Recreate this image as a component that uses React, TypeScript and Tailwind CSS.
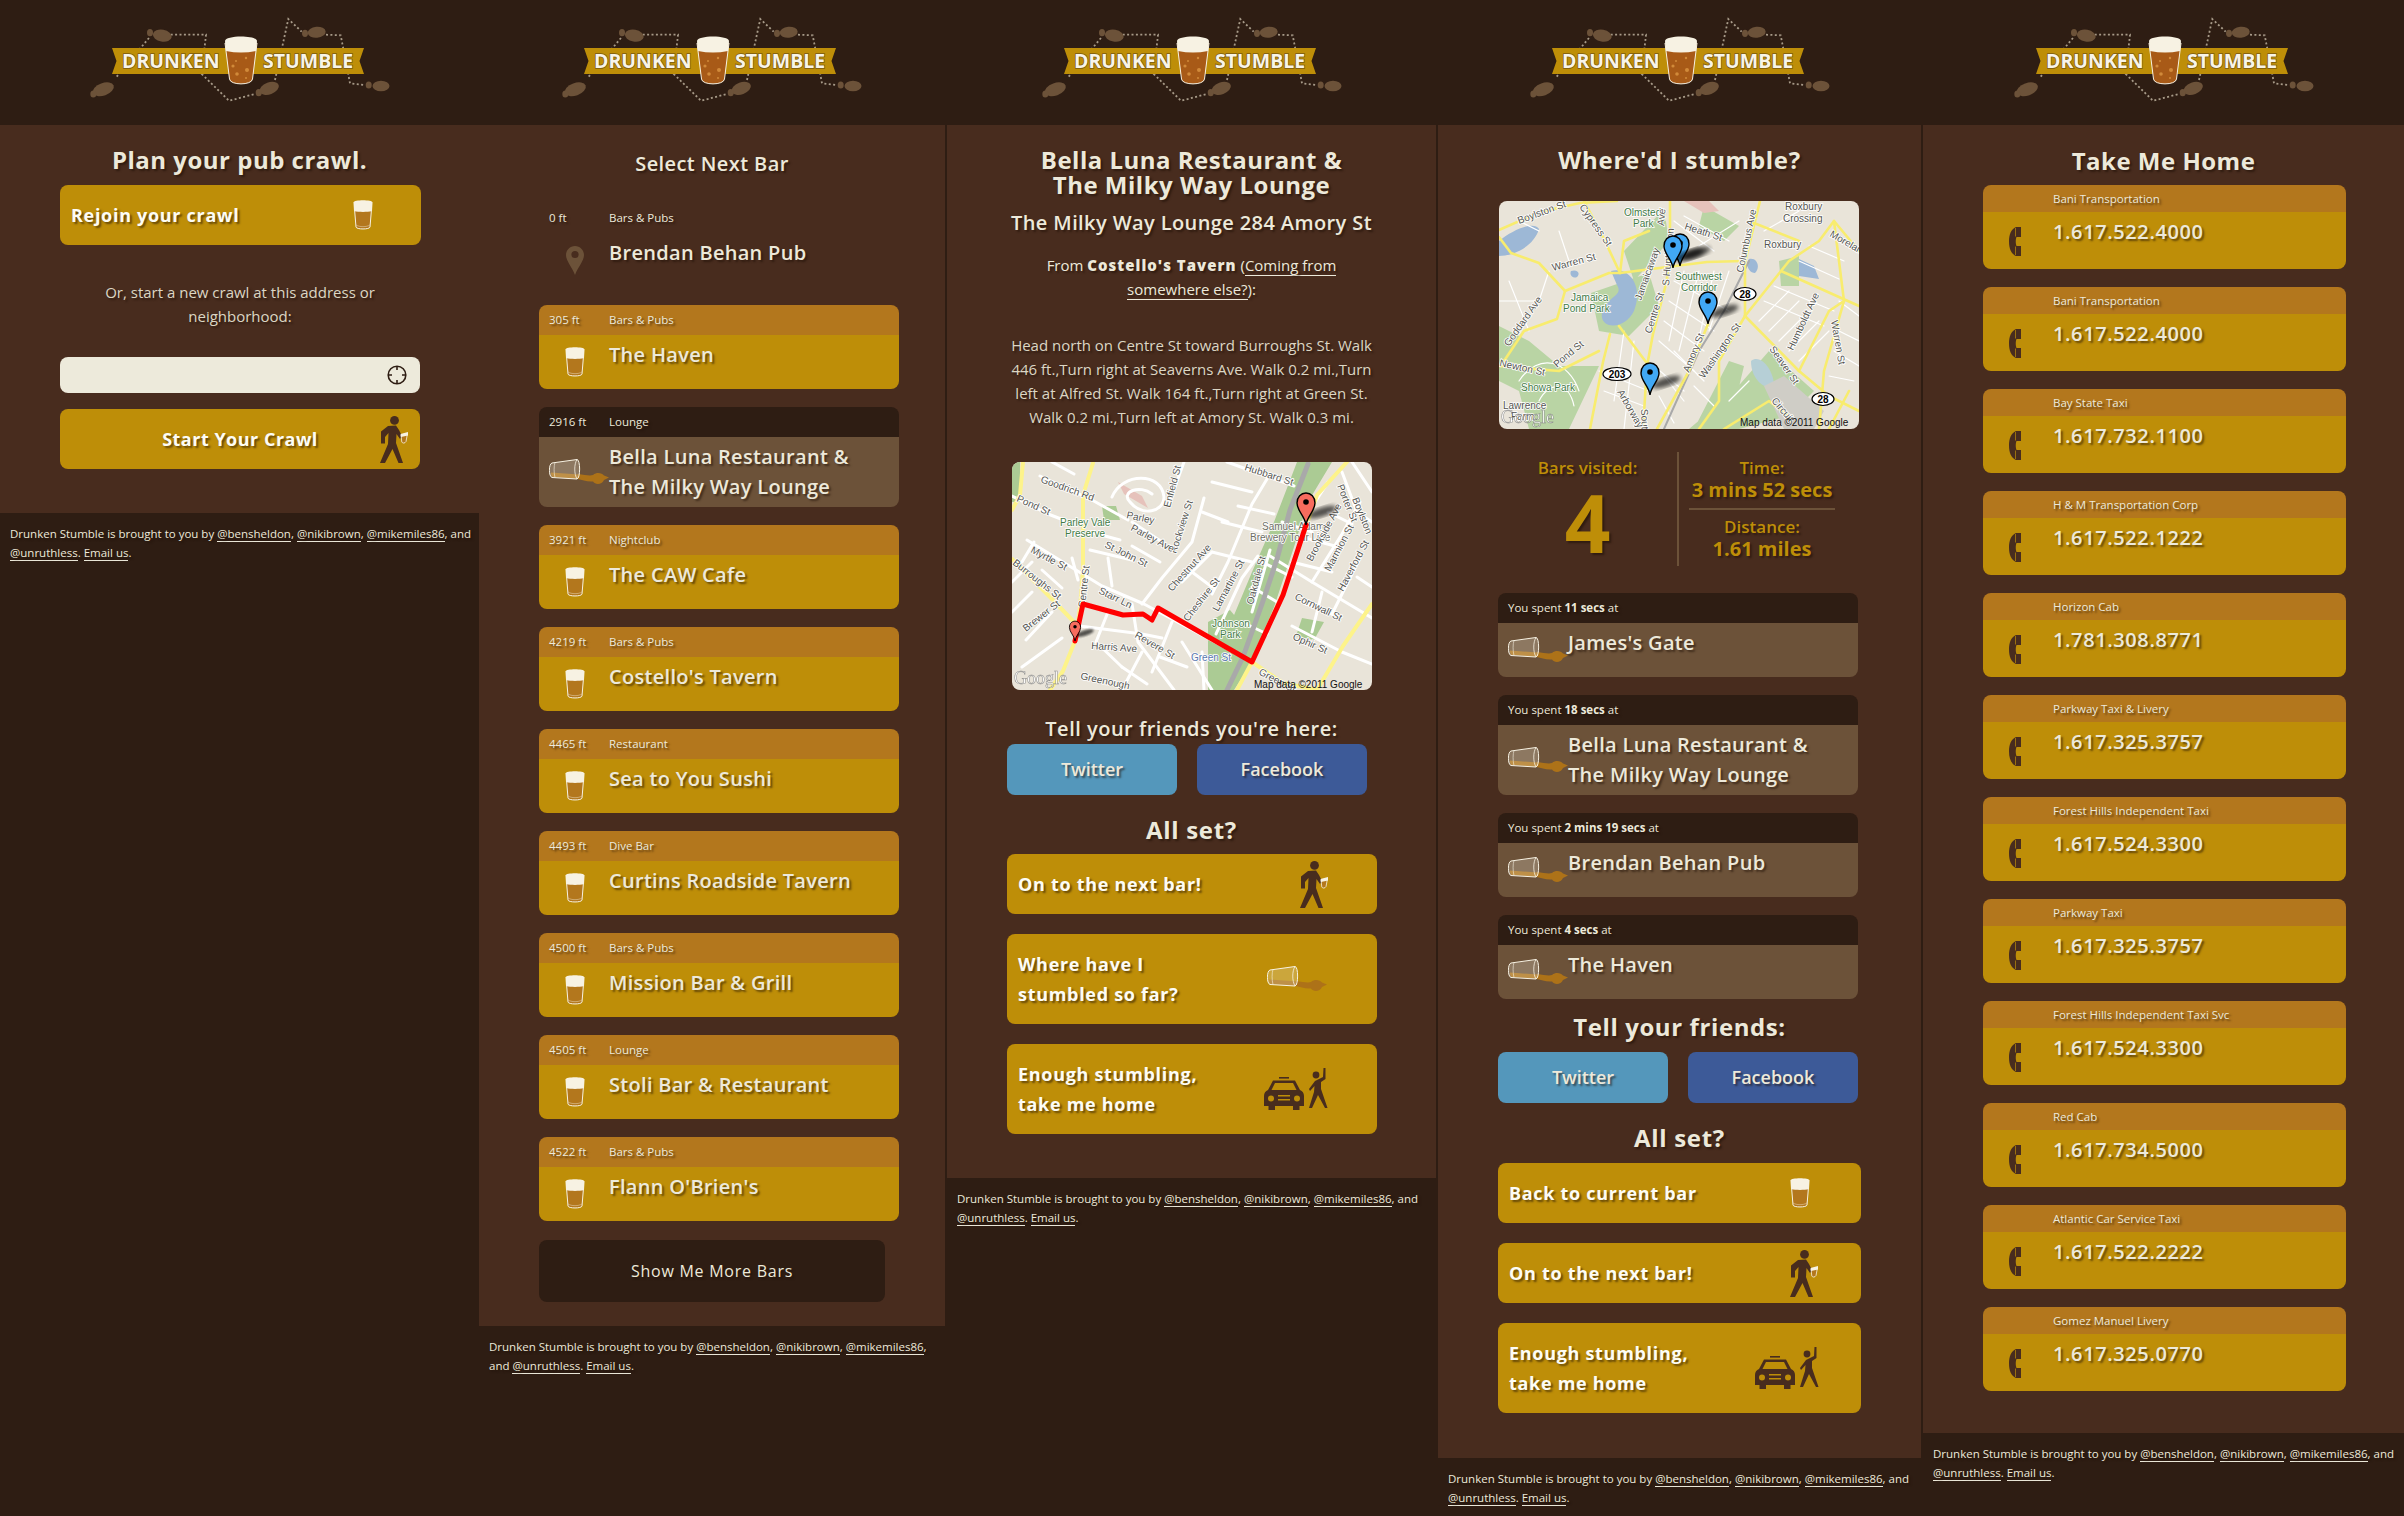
import type { ReactNode } from 'react'

const shadow = '[text-shadow:2px_2px_2px_rgba(30,15,5,0.55)]'

function Glass({ className = '' }: { className?: string }) {
  return (
    <svg className={className} width="20" height="30" viewBox="0 0 20 30">
      <path d="M1.5 9 L3 27 C3.2 29.6 16.8 29.6 17 27 L18.5 9 Z" fill="#b3771d" stroke="#f7f2e3" strokeWidth="1" />
      <path d="M3.2 25 C6 27.2 14 27.2 16.8 25" fill="none" stroke="#f7f2e3" strokeWidth="0.6" opacity="0.7" />
      <path d="M0.5 2.5 C0.5 -0.4 19.5 -0.4 19.5 2.5 L19 11 C14 12.2 6 12.2 1 11 Z" fill="#f7f2e3" />
    </svg>
  )
}

function PourGlass({ className = '' }: { className?: string }) {
  return (
    <svg className={className} width="60" height="28" viewBox="0 0 60 28">
      <path d="M29 16 C36 17 41 18 44 17 C48 13.5 53 15 55 17.5 L60 19.5 L55 22 C53 27 46 27 44 23.5 C38 24 33 22 29 21 Z" fill="#ad7218" />
      <path d="M2 14.5 L30 16.5 L30 21 L4 19 C2 18 2 17 2 14.5 Z" fill="#ad7218" />
      <path d="M3 5 L28 1.5 C31.5 1.5 31.5 20.5 28 21 L3 19.5 C-0.5 18.5 -0.5 6 3 5 Z" fill="#f7f2e3" fillOpacity="0.24" stroke="#f7f2e3" strokeWidth="1" />
      <path d="M6 4.5 C4.8 8 4.8 15 6 19.6" fill="none" stroke="#f7f2e3" strokeWidth="0.6" />
      <path d="M28 1.5 C25 6 25 16 28 21" fill="none" stroke="#f7f2e3" strokeWidth="0.8" />
    </svg>
  )
}

function Walker() {
  return (
    <svg width="29" height="47" viewBox="0 0 29 47">
      <circle cx="14.5" cy="4.4" r="4.4" fill="#482c1e" />
      <path d="M8 10 L16 9.5 L19 14 L22 20 L20 23 L16.5 18 L16 27 L23 47 L18.5 47 L12.5 33 L5 47 L0 47 L8 28 L8.5 17 L5 21 V27.5 H1 V15.5 Z" fill="#482c1e" />
      <path d="M21 19 L27.5 17.5 L26 25.5 C25 27.5 22.5 27.5 21.8 26 Z" fill="#b3771d" stroke="#f7f2e3" strokeWidth="0.8" />
      <path d="M20.5 18 L28 16 L28 19.5 L21 21 Z" fill="#f7f2e3" />
    </svg>
  )
}

function Taxi() {
  return (
    <svg width="64" height="42" viewBox="0 0 64 42" fill="#482c1e">
      <rect x="15" y="9" width="10" height="1.6" />
      <path d="M9 12.5 H31 L36 22 C38.5 23 40 25 40 28 V38 H35.5 V42 H29 V38 H11 V42 H4.5 V38 H0 V28 C0 25 1.5 23 4 22 Z" />
      <path d="M11 15 H29 L32.5 22 H7.5 Z" fill="#be8e08" />
      <circle cx="7" cy="30.5" r="3" fill="#be8e08" />
      <circle cx="33" cy="30.5" r="3" fill="#be8e08" />
      <rect x="14" y="27" width="12" height="1.5" fill="#be8e08" />
      <rect x="14" y="31" width="12" height="1.5" fill="#be8e08" />
      <circle cx="52" cy="7" r="3.4" />
      <path d="M59.5 0 H61.5 V11 L57 14 L57 21 L63.5 40 H61 L54 27 L48 40 H45 L50 24 L50.5 18 L46 23 L45 21 L51 13 L55 11 L59 9 Z" />
    </svg>
  )
}

function Phone() {
  return (
    <svg width="12" height="29" viewBox="0 0 12 29" fill="#482c1e">
      <path d="M12 0 H7 C2 2 0 8 0 14.5 C0 21 2 27 7 29 H12 V19 H7.5 C6.5 17 6.5 12 7.5 10 H12 Z" />
      <path d="M6.5 1 V9.5 M6.5 19.5 V28" stroke="#be8e08" strokeWidth="0.7" />
    </svg>
  )
}

function Pin() {
  return (
    <svg width="18" height="29" viewBox="0 0 18 29">
      <path d="M9 0 C4 0 0 4 0 9 C0 15 6 21 9 29 C12 21 18 15 18 9 C18 4 14 0 9 0 Z" fill="#6c5239" />
      <circle cx="9" cy="8.5" r="3.6" fill="#482c1e" />
    </svg>
  )
}

function Logo() {
  const feet = [
    [13.3, 73.3, 11, 6.2, -20, 3.3, 78],
    [72.3, 19.7, 9.5, 6, 10, 60, 16.7],
    [179.3, 72.3, 10, 6, -20, 168.7, 76.7],
    [226.7, 16.3, 9, 5.5, -5, 215, 17.3],
    [291, 70, 8.5, 5.2, 0, 278.7, 69],
  ]
  return (
    <svg width="300" height="90" viewBox="0 0 300 90">
      <path
        d="M26.7 60.7 L60 20.7 M80.7 18.7 H116 L111.7 58 L139 84.7 L165 78 M185 64 L198.3 3 L211.7 15.7 M236 18.7 L250.7 19.3 L260 67.3 L275 69"
        fill="none"
        stroke="#a79a88"
        strokeWidth="1.8"
        strokeDasharray="2 2.4"
      />
      {feet.map(([cx, cy, rx, ry, rot, hx, hy]) => (
        <g key={cx} fill="#6c5239">
          <ellipse cx={cx} cy={cy} rx={rx} ry={ry} transform={`rotate(${rot} ${cx} ${cy})`} />
          <ellipse cx={hx} cy={hy} rx="3" ry="3.6" />
        </g>
      ))}
      <path d="M22 32 H274 L269.5 45 L274 58 H22 L26.5 45 Z" fill="#be8e08" />
      <text x="32" y="52" fontSize="19.5" fontWeight="700" fill="#f8f4e8" style={{ paintOrder: 'stroke' }} stroke="#7a5a10" strokeWidth="1.5">
        DRUNKEN
      </text>
      <text x="173" y="52" fontSize="19.5" fontWeight="700" fill="#f8f4e8" style={{ paintOrder: 'stroke' }} stroke="#7a5a10" strokeWidth="1.5">
        STUMBLE
      </text>
      <path d="M135 27 L139.5 63 C140 69.5 162 69.5 162.5 63 L167 27 Z" fill="#a85a17" stroke="#f7f2e3" strokeWidth="1" />
      <g fill="#d18a3a">
        <circle cx="143" cy="50" r="1.6" />
        <circle cx="157" cy="54" r="2" />
        <circle cx="147" cy="58" r="1.8" />
        <circle cx="156" cy="42" r="1.2" />
        <circle cx="146" cy="45" r="1" />
        <circle cx="156" cy="62" r="1" />
      </g>
      <path d="M135 25 C135 19 167 19 167 25 L166 35 C156 37 146 37 136 35 Z" fill="#f7f2e3" />
    </svg>
  )
}

function Road({ d, color = '#ffffff', width = 3 }: { d: string; color?: string; width?: number }) {
  return <path d={d} fill="none" stroke={color} strokeWidth={width} strokeLinecap="round" strokeLinejoin="round" />
}

function Label({ x, y, rot = 0, size = 10, fill = '#555550', children }: { x: number; y: number; rot?: number; size?: number; fill?: string; children: ReactNode }) {
  return (
    <text
      x={x}
      y={y}
      transform={rot ? `rotate(${rot} ${x} ${y})` : undefined}
      fontSize={size}
      fontFamily="'Liberation Sans', sans-serif"
      fill={fill}
      stroke="#ffffff"
      strokeWidth="1.6"
      style={{ paintOrder: 'stroke' }}
    >
      {children}
    </text>
  )
}

function MapPin({ x, y, color, scale = 1 }: { x: number; y: number; color: string; scale?: number }) {
  return (
    <g transform={`translate(${x} ${y}) scale(${scale})`}>
      <ellipse cx="16" cy="-13" rx="15" ry="4.5" transform="rotate(-18 16 -13)" fill="#000" opacity="0.65" filter="url(#blur)" />
      <path d="M0 0 C-1 -9 -9 -14 -9 -22 C-9 -28 -5 -32 0 -32 C5 -32 9 -28 9 -22 C9 -14 1 -9 0 0 Z" fill={color} stroke="#000" strokeWidth="1.4" />
      <circle cx="0" cy="-23" r="2.8" fill="#000" />
    </g>
  )
}

function GoogleMark() {
  return (
    <text x="2" y="222" fontSize="18" fontFamily="'Liberation Serif', serif" fill="#fff" opacity="0.85" stroke="#777" strokeWidth="0.5">
      Google
    </text>
  )
}

const smallStreets1 = [
  'M28 14 L80 38 L116 58',
  'M0 34 L36 52 L62 62',
  'M215 0 L282 24',
  'M15 78 L90 124 L132 142 L240 200',
  'M192 36 L180 80 L150 116 L130 142',
  'M172 0 L156 44',
  'M200 132 L216 100 L240 42 L258 12',
  'M204 172 L230 116 L246 94',
  'M240 150 L258 88',
  'M258 94 L300 120 L360 156',
  'M300 120 L330 72 L348 40',
  'M320 152 L350 92',
  'M280 164 L330 190 L360 202',
  'M60 163 L130 172 L150 176',
  'M120 142 L126 180 L162 228',
  'M40 0 L62 12',
  'M100 35 C110 10 150 10 152 35 C152 50 130 55 118 40 C108 30 128 22 140 32',
  'M0 150 L20 130 M14 178 L40 150 M10 205 L50 176',
  'M30 108 L50 126 M22 80 L10 100 M60 96 L66 118',
  'M96 150 L84 180 L110 205',
  'M130 190 L110 228 M190 190 L192 228 M160 160 L140 210',
  'M290 75 L330 86 M280 100 L320 110 M270 60 L300 70',
  'M330 10 L345 50 L360 60 M340 0 L360 30',
  'M210 60 L250 70 M226 44 L262 52 M200 90 L240 100',
  'M290 140 L320 152 M300 170 L310 130',
  'M170 120 L200 90 M170 180 L200 228',
  'M150 80 L120 60 M148 100 L120 84',
  'M78 70 L108 78 M78 88 L120 98 M96 96 L100 124',
  'M200 20 L240 30 M190 50 L216 60 M180 110 L200 125',
  'M316 50 L340 62 M300 45 L316 20 M345 115 L360 125',
  'M250 100 L280 115 M240 125 L265 140 M230 160 L255 172',
  'M148 195 L175 205 M110 205 L135 222 M20 100 L0 120',
]

function MapOne() {
  return (
    <div className="w-[360px] h-[228px] rounded-lg overflow-hidden">
      <svg width="360" height="228" viewBox="0 0 360 228">
        <defs>
          <filter id="blur">
            <feGaussianBlur stdDeviation="2" />
          </filter>
        </defs>
        <rect width="360" height="228" fill="#e9e4d9" />
        <path d="M285 0 H320 L296 40 L282 85 L262 145 L240 200 L222 228 H200 L215 170 L240 110 L262 60 Z" fill="#abcb94" />
        <path d="M196 160 L218 148 L232 165 L218 228 H196 Z" fill="#abcb94" />
        <path d="M90 44 H104 L108 58 H92 Z M290 156 L312 160 L302 178 L284 174 Z M0 0 H8 V40 H0 Z" fill="#abcb94" />
        <path d="M106 20 L130 34 L136 46 L112 32 Z" fill="#e6c2bb" />
        {smallStreets1.map((d) => (
          <Road key={d} d={d} />
        ))}
        <Road d="M296 2 L278 48 L265 97 L251 139 L231 195 L215 228" color="#a9a9a9" width={5} />
        <Road d="M81 1 L71 33 L71 108 L68 146 L63 179 L51 209 L38 228" color="#fdf38a" width={4} />
        <Road d="M0 97 L38 135 L63 161" color="#fdf38a" width={4} />
        <Road d="M335 0 L305 33 L271 131 L240 200 L225 228" color="#fdf38a" width={4} />
        <Road d="M240 200 L271 221 L305 228" color="#fdf38a" width={4} />
        <Road d="M360 142 L331 184 L305 228" color="#fdf38a" width={4} />
        <Road d="M11 0 L8 33 L0 48" color="#fdf38a" width={4} />
        <Label x={28} y={20} rot={20}>Goodrich Rd</Label>
        <Label x={4} y={39} rot={24}>Pond St</Label>
        <Label x={48} y={64} fill="#3f7a45">Parley Vale</Label>
        <Label x={53} y={75} fill="#3f7a45">Preserve</Label>
        <Label x={232} y={8} rot={18}>Hubbard St</Label>
        <Label x={158} y={46} rot={-75}>Enfield St</Label>
        <Label x={164} y={92} rot={-72}>Rockview St</Label>
        <Label x={114} y={56} rot={12}>Parley</Label>
        <Label x={118} y={68} rot={28}>Parley Ave</Label>
        <Label x={92} y={85} rot={26}>St John St</Label>
        <Label x={18} y={90} rot={28}>Myrtle St</Label>
        <Label x={0} y={102} rot={38}>Burroughs St</Label>
        <Label x={73} y={146} rot={-84}>Centre St</Label>
        <Label x={86} y={131} rot={26}>Starr Ln</Label>
        <Label x={14} y={170} rot={-38}>Brewer St</Label>
        <Label x={79} y={187} rot={4}>Harris Ave</Label>
        <Label x={122} y={175} rot={30}>Revere St</Label>
        <Label x={160} y={130} rot={-48}>Chestnut Ave</Label>
        <Label x={176} y={160} rot={-52}>Cheshire St</Label>
        <Label x={206} y={150} rot={-62}>Lamartine St</Label>
        <Label x={241} y={143} rot={-75}>Oakdale St</Label>
        <Label x={200} y={165} fill="#3f7a45">Johnson</Label>
        <Label x={208} y={176} fill="#3f7a45">Park</Label>
        <Label x={179} y={199} fill="#5a78b0">Green St</Label>
        <Label x={250} y={68} fill="#6e6e64">Samuel Adams</Label>
        <Label x={238} y={79} fill="#6e6e64">Brewery Tour Line</Label>
        <Label x={300} y={100} rot={-62}>Brookside Ave</Label>
        <Label x={318} y={110} rot={-62}>Marmion St</Label>
        <Label x={331} y={130} rot={-62}>Haverford St</Label>
        <Label x={282} y={137} rot={26}>Cornwall St</Label>
        <Label x={280} y={177} rot={24}>Ophir St</Label>
        <Label x={325} y={24} rot={68}>Porter St</Label>
        <Label x={340} y={37} rot={68}>Boylston</Label>
        <Label x={246} y={212} rot={28}>Green St</Label>
        <Label x={68} y={217} rot={12}>Greenough</Label>
        <Road d="M63 179 L71 142 L111 153 L131 152 L140 158 L146 146 L240 200 L271 133 L294 63" color="#ff0000" width={5} />
        <MapPin x={294} y={63} color="#f76c5e" />
        <MapPin x={63} y={179} color="#f76c5e" scale={0.62} />
        <GoogleMark />
        <text x="242" y="226" fontSize="10" fontFamily="'Liberation Sans', sans-serif" fill="#111">Map data ©2011 Google</text>
      </svg>
    </div>
  )
}

function Shield({ x, y, n }: { x: number; y: number; n: string }) {
  return (
    <g>
      <ellipse cx={x} cy={y} rx={n.length > 2 ? 14 : 11} ry="6.5" fill="#fff" stroke="#000" strokeWidth="1.2" />
      <text x={x} y={y + 3.5} fontSize="10" fontWeight="700" textAnchor="middle" fontFamily="'Liberation Sans', sans-serif" fill="#000">
        {n}
      </text>
    </g>
  )
}

const yellowRoads2 = [
  'M0 29 L41 11 L81 2 L118 0',
  'M0 36 L12 52 L40 62 L66 90 L110 72 L121 72',
  'M121 72 L208 61 L244 60',
  'M111 133 L104 161 L91 228',
  'M171 0 L171 25 L168 79 L154 133 L148 165 L144 228',
  'M261 0 L246 61 L246 115',
  'M246 115 L300 170 L330 195 L360 210',
  'M246 115 L290 60 L320 40 L335 20 L345 100 L325 170 L320 228',
  'M360 50 L335 20 M250 20 L300 40 M282 70 L360 105',
  'M209 123 L190 170 L158 228',
  'M246 115 L220 160 L220 200 L200 228',
  'M120 125 L150 165 M66 90 L58 118 L25 130 L5 160 M0 165 L60 170 L100 150',
  'M85 0 L105 38 L121 72 L125 40 L150 30',
  'M350 190 L330 228 M300 170 L330 110 L345 100',
  'M225 228 L270 200 L290 215',
]

const thinStreets2 = [
  'M175 80 L230 110 M170 100 L215 130 M165 120 L205 150 M160 140 L195 170 M155 165 L185 190',
  'M185 70 L170 140 M200 70 L180 150 M215 70 L195 160 M230 70 L210 130',
  'M260 120 L290 90 M270 130 L300 100 M280 140 L310 110 M290 150 L320 120 M300 160 L330 130',
  'M265 100 L325 125 M275 85 L335 110 M300 60 L340 78 M310 45 L345 60',
  'M125 130 L115 200 M135 140 L125 228 M100 170 L150 190 M105 190 L145 205',
  'M20 180 C40 150 70 160 80 190 M40 200 C50 180 70 180 75 205 M230 200 L250 180',
  'M0 100 L40 100 L50 70 M10 80 L30 130 M60 30 L70 60 M40 30 L20 20',
  'M175 20 L215 50 M185 15 L230 40 M200 45 L240 20 M265 30 L300 10',
  'M165 175 L185 200 M160 195 L175 222 M175 150 L205 180 M195 185 L215 205',
  'M340 130 L360 140 M335 150 L360 165 M330 175 L355 180 M340 100 L360 115',
]

function MapTwo() {
  return (
    <div className="w-[360px] h-[228px] rounded-lg overflow-hidden">
      <svg width="360" height="228" viewBox="0 0 360 228">
        <defs>
          <filter id="blur">
            <feGaussianBlur stdDeviation="2" />
          </filter>
        </defs>
        <rect width="360" height="228" fill="#e9e4d9" />
        <path d="M125 50 L165 8 L170 40 L135 80 Z M205 5 L240 25 L225 40 L200 25 Z M92 92 L150 72 L160 105 L130 135 L100 130 Z M235 190 L270 150 L315 190 L290 215 L240 228 H190 Z M0 125 L30 140 L60 165 L100 165 L70 228 H30 L20 190 L0 180 Z M280 60 L300 55 L300 85 L282 85 Z M195 228 L230 160 L245 165 L230 228 Z" fill="#b9d4a4" />
        <path d="M185 0 H210 L220 10 L205 12 Z" fill="#e6c2bb" />
        <path d="M112 70 C130 65 145 85 135 110 C125 130 100 128 103 112 C108 95 125 95 118 84 Z" fill="#9db8d6" />
        <path d="M0 40 C15 28 35 20 40 28 C35 45 15 55 0 55 Z M72 70 C78 68 82 72 78 76 C74 78 70 74 72 70 Z M250 58 C258 56 262 66 256 72 C250 72 246 64 250 58 Z M300 58 L315 65 L320 78 L300 75 Z" fill="#9db8d6" />
        <path d="M252 160 C262 152 275 170 275 185 C268 190 252 180 252 160 Z" fill="#b6cfd6" />
        <path d="M265 185 L285 175 L325 210 L315 228 H285 Z" fill="#cfcdc6" />
        {thinStreets2.map((d) => (
          <Road key={d} d={d} color="#ffffff" width={1.2} />
        ))}
        <Road d="M250 60 L225 110 L200 150 L165 228" color="#a9a9a9" width={2} />
        {yellowRoads2.map((d) => (
          <Road key={d} d={d} color="#f8ec6e" width={2.6} />
        ))}
        <Label x={20} y={23} rot={-20}>Boylston St</Label>
        <Label x={80} y={6} rot={55}>Cypress St</Label>
        <Label x={125} y={15} fill="#3f7a45">Olmsted</Label>
        <Label x={134} y={26} fill="#3f7a45">Park</Label>
        <Label x={165} y={25} rot={-85}>Ave</Label>
        <Label x={170} y={85} rot={-85}>S Huntington</Label>
        <Label x={185} y={28} rot={18}>Heath St</Label>
        <Label x={142} y={100} rot={-70}>Jamaicaway</Label>
        <Label x={176} y={79} fill="#3f7a45">Southwest</Label>
        <Label x={182} y={90} fill="#3f7a45">Corridor</Label>
        <Label x={244} y={72} rot={-78}>Columbus Ave</Label>
        <Label x={286} y={9}>Roxbury</Label>
        <Label x={284} y={21}>Crossing</Label>
        <Label x={265} y={47}>Roxbury</Label>
        <Label x={330} y={35} rot={30}>Moreland</Label>
        <Label x={72} y={100} fill="#3f7a45">Jamaica</Label>
        <Label x={64} y={111} fill="#3f7a45">Pond Park</Label>
        <Label x={10} y={146} rot={-55}>Goddard Ave</Label>
        <Label x={0} y={165} rot={12}>Newton St</Label>
        <Label x={58} y={167} rot={-40}>Pond St</Label>
        <Label x={22} y={190} fill="#3f7a45">Showa Park</Label>
        <Label x={54} y={70} rot={-15}>Warren St</Label>
        <Label x={152} y={133} rot={-72}>Centre St</Label>
        <Label x={142} y={208} rot={88}>South St</Label>
        <Label x={118} y={191} rot={60}>Arborway</Label>
        <Label x={190} y={172} rot={-68}>Amory St</Label>
        <Label x={205} y={178} rot={-55}>Washington St</Label>
        <Label x={270} y={148} rot={55}>Seaver St</Label>
        <Label x={294} y={150} rot={-65}>Humboldt Ave</Label>
        <Label x={332} y={120} rot={80}>Warren St</Label>
        <Label x={272} y={200} rot={50}>Circuit</Label>
        <Label x={4} y={208}>Lawrence</Label>
        <Label x={12} y={219}>Farm</Label>
        <Shield x={246} y={93} n="28" />
        <Shield x={118} y={173} n="203" />
        <Shield x={324} y={198} n="28" />
        <MapPin x={181} y={65} color="#41a8f5" />
        <MapPin x={174} y={67} color="#41a8f5" />
        <MapPin x={209} y={123} color="#41a8f5" />
        <MapPin x={151} y={194} color="#41a8f5" />
        <GoogleMark />
        <text x="241" y="225" fontSize="10" fontFamily="'Liberation Sans', sans-serif" fill="#111">Map data ©2011 Google</text>
      </svg>
    </div>
  )
}

function Credit({ children }: { children: ReactNode }) {
  return <span className="border-b border-[#ede9da]">{children}</span>
}

function Column({ width, children }: { width: string; children: ReactNode }) {
  return (
    <div className={`${width} shrink-0 flex flex-col`}>
      <div className="h-[125px] flex justify-center pt-[16px]">
        <Logo />
      </div>
      <main className="bg-[#482c1e] pl-[60px]">{children}</main>
      <footer className={`pl-[10px] pr-[2px] pt-[11px] text-[11.5px] leading-[19px] text-[#ede9da] ${shadow}`}>
        Drunken Stumble is brought to you by <Credit>@bensheldon</Credit>, <Credit>@nikibrown</Credit>, <Credit>@mikemiles86</Credit>, and <Credit>@unruthless</Credit>. <Credit>Email us</Credit>.
      </footer>
    </div>
  )
}

function Title({ children, className = '' }: { children: ReactNode; className?: string }) {
  return <h2 className={`-ml-[60px] text-center text-[#ede9da] ${shadow} ${className}`}>{children}</h2>
}

function Action({ lines, tall, textWidth, icon, width = 'w-[370px]' }: { lines: string[]; tall?: boolean; textWidth: string; icon: ReactNode; width?: string }) {
  return (
    <div className={`${width} ${tall ? 'h-[90px]' : 'h-[60px]'} flex items-center pl-[11px] rounded-lg bg-[#be8e08] text-[18px] leading-[30px] font-bold tracking-[0.7px] text-[#fdfcf5] ${shadow}`}>
      <span className={`${textWidth} shrink-0`}>
        {lines.map((l) => (
          <span key={l} className="block">
            {l}
          </span>
        ))}
      </span>
      {icon}
    </div>
  )
}

function Card({ head, name, active, plain, icon }: { head: ReactNode; name: string[]; active?: boolean; plain?: boolean; icon: ReactNode }) {
  const headBg = plain ? '' : active ? 'bg-[#2e1d13]' : 'bg-[#b3771d]'
  const bodyBg = plain ? '' : active ? 'bg-[#6c5239]' : 'bg-[#be8e08]'
  return (
    <div className="w-[360px] rounded-lg overflow-hidden text-[#ede9da]">
      <div className={`h-[30px] flex items-center pl-[10px] text-[11.5px] ${shadow} ${headBg}`}>{head}</div>
      <div className={`min-h-[54px] flex ${bodyBg}`}>
        <div className="w-[70px] shrink-0 flex items-center">{icon}</div>
        <div className={`pt-[5px] pb-[5px] text-[20px] leading-[30px] font-semibold tracking-[0.3px] ${shadow}`}>
          {name.map((l) => (
            <span key={l} className="block">
              {l}
            </span>
          ))}
        </div>
      </div>
    </div>
  )
}

function BarHead({ dist, cat }: { dist: string; cat: string }) {
  return (
    <>
      <span className="w-[60px]">{dist}</span>
      <span>{cat}</span>
    </>
  )
}

const bars = [
  { dist: '305 ft', cat: 'Bars & Pubs', name: ['The Haven'] },
  { dist: '2916 ft', cat: 'Lounge', name: ['Bella Luna Restaurant &', 'The Milky Way Lounge'], active: true },
  { dist: '3921 ft', cat: 'Nightclub', name: ['The CAW Cafe'] },
  { dist: '4219 ft', cat: 'Bars & Pubs', name: ["Costello's Tavern"] },
  { dist: '4465 ft', cat: 'Restaurant', name: ['Sea to You Sushi'] },
  { dist: '4493 ft', cat: 'Dive Bar', name: ['Curtins Roadside Tavern'] },
  { dist: '4500 ft', cat: 'Bars & Pubs', name: ['Mission Bar & Grill'] },
  { dist: '4505 ft', cat: 'Lounge', name: ['Stoli Bar & Restaurant'] },
  { dist: '4522 ft', cat: 'Bars & Pubs', name: ["Flann O'Brien's"] },
]

const visits = [
  { time: '11 secs', name: ["James's Gate"] },
  { time: '18 secs', name: ['Bella Luna Restaurant &', 'The Milky Way Lounge'] },
  { time: '2 mins 19 secs', name: ['Brendan Behan Pub'] },
  { time: '4 secs', name: ['The Haven'] },
]

const taxis = [
  ['Bani Transportation', '1.617.522.4000'],
  ['Bani Transportation', '1.617.522.4000'],
  ['Bay State Taxi', '1.617.732.1100'],
  ['H & M Transportation Corp', '1.617.522.1222'],
  ['Horizon Cab', '1.781.308.8771'],
  ['Parkway Taxi & Livery', '1.617.325.3757'],
  ['Forest Hills Independent Taxi', '1.617.524.3300'],
  ['Parkway Taxi', '1.617.325.3757'],
  ['Forest Hills Independent Taxi Svc', '1.617.524.3300'],
  ['Red Cab', '1.617.734.5000'],
  ['Atlantic Car Service Taxi', '1.617.522.2222'],
  ['Gomez Manuel Livery', '1.617.325.0770'],
]

function ShareButtons() {
  return (
    <div className={`flex gap-[20px] text-[18px] font-semibold text-[#ede9da] ${shadow}`}>
      <div className="w-[170px] h-[51px] rounded-lg bg-[#5497bb] flex items-center justify-center">Twitter</div>
      <div className="w-[170px] h-[51px] rounded-lg bg-[#3d5a98] flex items-center justify-center">Facebook</div>
    </div>
  )
}

export default function App() {
  return (
    <div className="min-h-[1516px] flex bg-[#2e1d13] font-['Open_Sans',sans-serif]">
      <Column width="w-[479px]">
        <div className="pt-[20px] pb-[44px]">
          <Title className="text-[24px] leading-[30px] font-bold tracking-[0.5px] mb-[10px]">Plan your pub crawl.</Title>
          <Action lines={['Rejoin your crawl']} width="w-[361px]" textWidth="w-[282px]" icon={<Glass />} />
          <p className={`w-[360px] mt-[35px] mb-[29px] px-[30px] text-center text-[15px] leading-[24px] text-[#dcd6c4] ${shadow}`}>
            Or, start a new crawl at this address or neighborhood:
          </p>
          <div className="w-[360px] h-[36px] rounded-lg bg-[#edeadb] flex items-center justify-end pr-[13px]">
            <svg width="20" height="20" viewBox="0 0 20 20" fill="none" stroke="#2e1d13" strokeWidth="1.6">
              <circle cx="10" cy="10" r="8.8" />
              <path d="M10 1V5M10 15V19M1 10H5M15 10H19" />
            </svg>
          </div>
          <div className={`relative w-[360px] h-[60px] mt-[16px] rounded-lg bg-[#be8e08] flex items-center justify-center text-[18px] font-bold tracking-[0.5px] text-[#fdfcf5] ${shadow}`}>
            Start Your Crawl
            <span className="absolute left-[320px] top-[7px]">
              <Walker />
            </span>
          </div>
        </div>
      </Column>

      <Column width="w-[466px]">
        <div className="pt-[24px] pb-[24px]">
          <Title className="text-[20px] leading-[30px] font-semibold tracking-[0.4px] mb-[24px]">Select Next Bar</Title>
          <div className="flex flex-col gap-[18px]">
            <Card
              plain
              head={<BarHead dist="0 ft" cat="Bars & Pubs" />}
              name={['Brendan Behan Pub']}
              icon={<span className="ml-[27px]"><Pin /></span>}
            />
            {bars.map((b) => (
              <Card
                key={b.dist}
                active={b.active}
                head={<BarHead dist={b.dist} cat={b.cat} />}
                name={b.name}
                icon={b.active ? <PourGlass className="ml-[10px]" /> : <Glass className="ml-[26px]" />}
              />
            ))}
          </div>
          <div className={`w-[346px] h-[62px] mt-[19px] rounded-lg bg-[#2e1d13] flex items-center justify-center text-[16px] tracking-[0.75px] text-[#ede9da] ${shadow}`}>
            Show Me More Bars
          </div>
        </div>
      </Column>

      <div className="w-[2px]" />

      <Column width="w-[489px]">
        <div className="pt-[22px] pb-[44px]">
          <Title className="text-[24px] leading-[25px] font-bold tracking-[0.5px]">
            Bella Luna Restaurant &<br />The Milky Way Lounge
          </Title>
          <Title className="mt-[12px] text-[20px] leading-[28px] font-semibold tracking-[0.4px]">The Milky Way Lounge 284 Amory St</Title>
          <p className={`-ml-[60px] mt-[16px] text-center text-[15px] leading-[24px] text-[#ede9da] ${shadow}`}>
            From <b className="font-extrabold tracking-[1px]">Costello's Tavern</b> (<span className="border-b border-[#ede9da]">Coming from</span>
            <br />
            <span className="border-b border-[#ede9da]">somewhere else?</span>):
          </p>
          <p className={`-ml-[60px] mt-[32px] mb-[33px] text-center text-[15px] leading-[24px] text-[#dcd6c4] ${shadow}`}>
            Head north on Centre St toward Burroughs St. Walk
            <br />
            446 ft.,Turn right at Seaverns Ave. Walk 0.2 mi.,Turn
            <br />
            left at Alfred St. Walk 164 ft.,Turn right at Green St.
            <br />
            Walk 0.2 mi.,Turn left at Amory St. Walk 0.3 mi.
          </p>
          <div className="ml-[5px]">
            <MapOne />
          </div>
          <Title className="mt-[24px] text-[20px] leading-[30px] font-semibold tracking-[0.5px]">Tell your friends you're here:</Title>
          <ShareButtons />
          <Title className="mt-[20px] mb-[9px] text-[24px] leading-[30px] font-bold tracking-[0.7px]">All set?</Title>
          <div className="flex flex-col gap-[20px]">
            <Action lines={['On to the next bar!']} textWidth="w-[282px]" icon={<Walker />} />
            <Action tall lines={['Where have I', 'stumbled so far?']} textWidth="w-[249px]" icon={<PourGlass />} />
            <Action tall lines={['Enough stumbling,', 'take me home']} textWidth="w-[246px]" icon={<Taxi />} />
          </div>
        </div>
      </Column>

      <div className="w-[2px]" />

      <Column width="w-[483px]">
        <div className="pt-[20px] pb-[45px]">
          <Title className="text-[24px] leading-[30px] font-bold tracking-[0.7px] mb-[26px]">Where'd I stumble?</Title>
          <div className="ml-[1px]">
            <MapTwo />
          </div>
          <div className={`flex h-[114px] mt-[23px] mb-[27px] text-[#be8e08] text-center ${shadow}`}>
            <div className="w-[179px] pt-[5px] text-[17px] leading-[22px] font-semibold">
              Bars visited:
              <div className="text-[80px] leading-[86px] font-bold">4</div>
            </div>
            <div className="w-[168px] border-l-2 border-[#6c5239] pt-[5px] text-[17px] leading-[22px] font-semibold">
              Time:
              <div className="text-[20px] font-bold">3 mins 52 secs</div>
              <div className="mx-[10px] mt-[7px] mb-[6px] border-t-2 border-[#6c5239]" />
              Distance:
              <div className="text-[20px] font-bold">1.61 miles</div>
            </div>
          </div>
          <div className="flex flex-col gap-[18px]">
            {visits.map((v) => (
              <Card
                key={v.time}
                active
                head={
                  <span>
                    You spent <b className="font-bold">{v.time}</b> at
                  </span>
                }
                name={v.name}
                icon={<PourGlass className="ml-[10px]" />}
              />
            ))}
          </div>
          <Title className="mt-[13px] mb-[10px] text-[24px] leading-[30px] font-bold tracking-[0.6px]">Tell your friends:</Title>
          <ShareButtons />
          <Title className="mt-[20px] mb-[10px] text-[24px] leading-[30px] font-bold tracking-[0.7px]">All set?</Title>
          <div className="flex flex-col gap-[20px]">
            <Action width="w-[363px]" lines={['Back to current bar']} textWidth="w-[281px]" icon={<Glass />} />
            <Action width="w-[363px]" lines={['On to the next bar!']} textWidth="w-[281px]" icon={<Walker />} />
            <Action width="w-[363px]" tall lines={['Enough stumbling,', 'take me home']} textWidth="w-[246px]" icon={<Taxi />} />
          </div>
        </div>
      </Column>

      <div className="w-[2px]" />

      <Column width="w-[481px]">
        <div className="pt-[21px] pb-[42px]">
          <Title className="text-[24px] leading-[30px] font-bold tracking-[0.5px] mb-[9px]">Take Me Home</Title>
          <div className="flex flex-col gap-[18px]">
            {taxis.map(([name, phone], i) => (
              <div key={i} className="w-[363px] rounded-lg overflow-hidden text-[#ede9da]">
                <div className={`h-[27px] pt-[1px] flex items-center pl-[70px] text-[11.5px] bg-[#b3771d] ${shadow}`}>{name}</div>
                <div className="h-[57px] flex bg-[#be8e08]">
                  <div className="w-[70px] pl-[26px] pt-[15px] shrink-0">
                    <Phone />
                  </div>
                  <div className={`pt-[5px] text-[20px] leading-[30px] font-semibold tracking-[0.6px] ${shadow}`}>{phone}</div>
                </div>
              </div>
            ))}
          </div>
        </div>
      </Column>
    </div>
  )
}
